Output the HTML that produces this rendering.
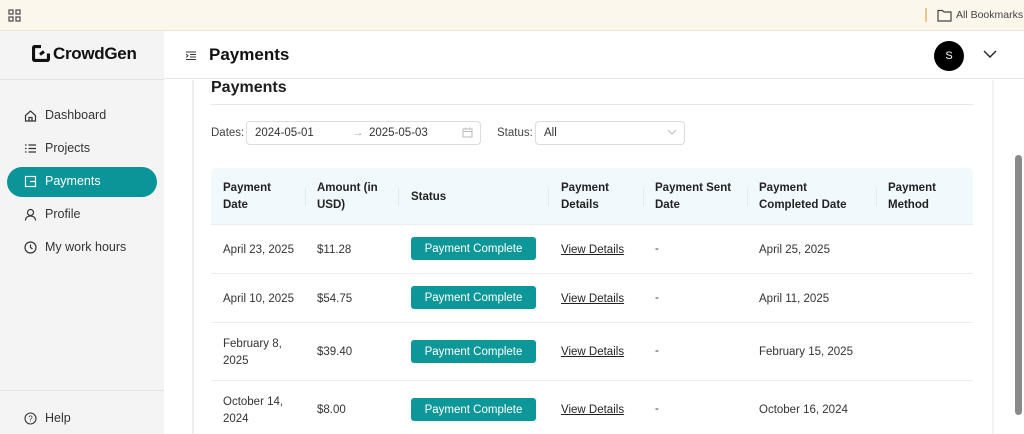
<!DOCTYPE html>
<html><head><style>
*{box-sizing:border-box;margin:0;padding:0}
body{width:1024px;height:434px;overflow:hidden;font-family:"Liberation Sans",sans-serif;color:#222;background:#fff;position:relative}
.bm{position:absolute;left:0;top:0;width:1024px;height:31px;background:#fcf7ec;border-bottom:1px solid #ece6d8}
.side{position:absolute;left:0;top:31px;width:164px;height:403px;background:#f4f4f4}
.logo{position:absolute;left:32px;top:44px;font-weight:bold;font-size:17px;color:#111;letter-spacing:-0.3px}
.nav{position:absolute;left:24px;font-size:12.5px;color:#333;display:flex;align-items:center;gap:8px}
.active{position:absolute;left:7px;top:167px;width:150px;height:30px;border-radius:15px;background:#0b9598}
.hdr{position:absolute;left:164px;top:31px;width:860px;height:48px;background:#fff;border-bottom:1px solid #e8e8e8}
.t{position:absolute;font-size:13px}
.h{position:absolute;font-size:11.5px;font-weight:bold;line-height:17px;color:#222}
.c{position:absolute;font-size:11.5px;line-height:17px;color:#333}
.btn{position:absolute;left:411px;width:125px;height:23px;background:#0e9799;border-radius:3px;color:#fff;font-size:11.5px;text-align:center;line-height:24px}
.vd{position:absolute;left:561px;font-size:11.5px;text-decoration:underline;color:#222;line-height:17px}
.line{position:absolute;left:211px;width:762px;height:1px;background:#ececec}
.sep{position:absolute;top:188px;width:1px;height:18px;background:#e4e9ec}
</style></head><body>
<div class="bm">
<svg style="position:absolute;left:8px;top:9px" width="13" height="13"><g fill="none" stroke="#555" stroke-width="1.3"><rect x="1" y="1" width="4" height="4"/><rect x="8" y="1" width="4" height="4"/><rect x="1" y="8" width="4" height="4"/><rect x="8" y="8" width="4" height="4"/></g></svg>
<div style="position:absolute;left:925px;top:8px;width:2px;height:14px;background:#e6c98a"></div>
<svg style="position:absolute;left:937px;top:9px" width="15" height="13"><path d="M1 1.5h4.5l1.5 1.5H14V12H1z" fill="none" stroke="#444" stroke-width="1.2"/></svg>
<div style="position:absolute;left:956px;top:9px;font-size:10.5px;color:#444">All Bookmarks</div>
</div>
<div class="side"></div>
<div style="position:absolute;left:0;top:79px;width:164px;height:1px;background:#e3e3e3"></div>
<div style="position:absolute;left:0;top:390px;width:164px;height:1px;background:#e3e3e3"></div>
<svg style="position:absolute;left:32px;top:45px" width="18" height="17"><path d="M9 1.5H3.5Q1.5 1.5 1.5 3.5V13.5Q1.5 15.5 3.5 15.5H14.5Q16.5 15.5 16.5 13.5V8.5" fill="none" stroke="#111" stroke-width="3.2"/><path d="M8 9.5L12 6.5" stroke="#111" stroke-width="3"/></svg>
<div class="logo" style="left:53px">CrowdGen</div>
<div class="active"></div>
<div class="nav" style="top:108px"><svg width="13" height="13"><path d="M1.5 6.5L6.5 2l5 4.5V12h-10z M5 12V8.5h3V12" fill="none" stroke="#333" stroke-width="1.2"/></svg>Dashboard</div>
<div class="nav" style="top:141px"><svg width="13" height="13"><path d="M1 3h1.5M1 6.5h1.5M1 10h1.5M4.5 3H12M4.5 6.5H12M4.5 10H12" stroke="#333" stroke-width="1.2"/></svg>Projects</div>
<div class="nav" style="top:174px;color:#fff"><svg width="13" height="13"><rect x="1.5" y="1.5" width="10" height="10" fill="none" stroke="#fff" stroke-width="1.2"/><path d="M6 6.5h5.5" stroke="#fff" stroke-width="1.2"/></svg>Payments</div>
<div class="nav" style="top:207px"><svg width="13" height="13"><circle cx="6.5" cy="4.5" r="3" fill="none" stroke="#333" stroke-width="1.2"/><path d="M1.5 12.5c0-3 2.2-4.5 5-4.5s5 1.5 5 4.5" fill="none" stroke="#333" stroke-width="1.2"/></svg>Profile</div>
<div class="nav" style="top:240px"><svg width="13" height="13"><circle cx="6.5" cy="6.5" r="5.5" fill="none" stroke="#333" stroke-width="1.2"/><path d="M6.5 3.5v3l2 1.5" fill="none" stroke="#333" stroke-width="1.2"/></svg>My work hours</div>
<div class="nav" style="top:411px"><svg width="13" height="13"><circle cx="6.5" cy="6.5" r="5.5" fill="none" stroke="#333" stroke-width="1.1"/><text x="6.5" y="9.5" font-size="8" text-anchor="middle" fill="#333" font-family="Liberation Sans">?</text></svg>Help</div>
<div class="hdr"></div>
<svg style="position:absolute;left:186px;top:51px" width="10" height="9"><path d="M0 1h10M4 3.5h6M4 6h6M0 8.5h10M0 3l2 1.8L0 6.5" fill="none" stroke="#333" stroke-width="1"/></svg>
<div class="t" style="left:209px;top:45px;font-size:17px;font-weight:bold;color:#111">Payments</div>
<div style="position:absolute;left:934px;top:41px;width:30px;height:30px;border-radius:50%;background:#000;color:#fff;font-size:11px;text-align:center;line-height:30px">S</div>
<svg style="position:absolute;left:983px;top:50px" width="14" height="9"><path d="M1 1l6 6 6-6" fill="none" stroke="#222" stroke-width="1.4"/></svg>
<div style="position:absolute;left:192px;top:80px;width:2px;height:354px;background:#eeeeee"></div>
<div style="position:absolute;left:992px;top:80px;width:2px;height:354px;background:#f2f2f2"></div>
<div style="position:absolute;left:1015px;top:155px;width:7px;height:260px;background:#8a8a8a;border-radius:4px"></div>
<div class="t" style="left:211px;top:79px;font-size:16px;font-weight:bold;color:#1c1c1c">Payments</div>
<div style="position:absolute;left:211px;top:104px;width:762px;height:1px;background:#e8e8e8"></div>
<div class="c" style="left:211px;top:125px;color:#444">Dates:</div>
<div style="position:absolute;left:246px;top:121px;width:235px;height:24px;border:1px solid #dcdcdc;border-radius:4px"></div>
<div class="c" style="left:255px;top:125px">2024-05-01</div>
<div class="c" style="left:352px;top:125px;color:#aaa">→</div>
<div class="c" style="left:369px;top:125px">2025-05-03</div>
<svg style="position:absolute;left:462px;top:127px" width="11" height="11"><rect x="1" y="2" width="9" height="8" fill="none" stroke="#bbb"/><path d="M1 4.5h9M3.5 0.5v2M7.5 0.5v2" stroke="#bbb"/></svg>
<div class="c" style="left:497px;top:125px;color:#444">Status:</div>
<div style="position:absolute;left:535px;top:121px;width:150px;height:24px;border:1px solid #dcdcdc;border-radius:4px"></div>
<div class="c" style="left:544px;top:125px">All</div>
<svg style="position:absolute;left:667px;top:129px" width="10" height="6"><path d="M1 1l4 4 4-4" fill="none" stroke="#bbb"/></svg>
<div style="position:absolute;left:211px;top:168px;width:762px;height:56px;background:#f2f9fc;border-radius:6px 6px 0 0"></div>
<div class="sep" style="left:305px"></div><div class="sep" style="left:398px"></div><div class="sep" style="left:548px"></div><div class="sep" style="left:643px"></div><div class="sep" style="left:747px"></div><div class="sep" style="left:876px"></div>
<div class="h" style="left:223px;top:180px">Payment<br>Date</div>
<div class="h" style="left:317px;top:180px">Amount (in<br>USD)</div>
<div class="h" style="left:411px;top:189px">Status</div>
<div class="h" style="left:561px;top:180px">Payment<br>Details</div>
<div class="h" style="left:655px;top:180px">Payment Sent<br>Date</div>
<div class="h" style="left:759px;top:180px">Payment<br>Completed Date</div>
<div class="h" style="left:888px;top:180px">Payment<br>Method</div>
<div class="line" style="top:224px"></div>
<div class="line" style="top:273px"></div>
<div class="line" style="top:322px"></div>
<div class="line" style="top:380px"></div>
<div class="c" style="left:223px;top:242px">April 23, 2025</div><div class="c" style="left:317px;top:242px">$11.28</div><div class="btn" style="top:237px">Payment Complete</div><div class="vd" style="top:242px">View Details</div><div class="c" style="left:655px;top:241px">-</div><div class="c" style="left:759px;top:242px">April 25, 2025</div>
<div class="c" style="left:223px;top:291px">April 10, 2025</div><div class="c" style="left:317px;top:291px">$54.75</div><div class="btn" style="top:286px">Payment Complete</div><div class="vd" style="top:291px">View Details</div><div class="c" style="left:655px;top:290px">-</div><div class="c" style="left:759px;top:291px">April 11, 2025</div>
<div class="c" style="left:223px;top:336px">February 8,<br>2025</div><div class="c" style="left:317px;top:344px">$39.40</div><div class="btn" style="top:340px">Payment Complete</div><div class="vd" style="top:344px">View Details</div><div class="c" style="left:655px;top:343px">-</div><div class="c" style="left:759px;top:344px">February 15, 2025</div>
<div class="c" style="left:223px;top:394px">October 14,<br>2024</div><div class="c" style="left:317px;top:402px">$8.00</div><div class="btn" style="top:398px">Payment Complete</div><div class="vd" style="top:402px">View Details</div><div class="c" style="left:655px;top:401px">-</div><div class="c" style="left:759px;top:402px">October 16, 2024</div>
</body></html>
